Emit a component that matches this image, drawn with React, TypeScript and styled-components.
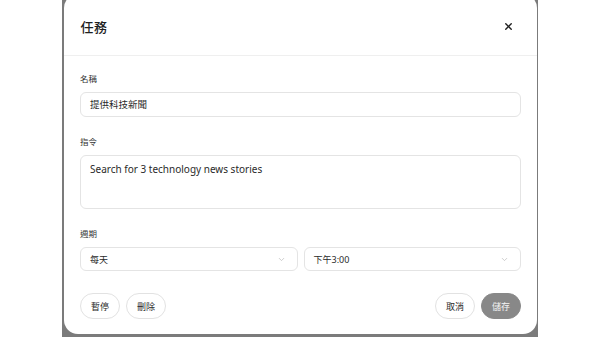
import React from 'react';
import styled, { createGlobalStyle } from 'styled-components';
import { ChevronDown, X } from 'lucide-react';

const GlobalStyle = createGlobalStyle`
  html, body {
    margin: 0;
    padding: 0;
    background: #ffffff;
  }
  body {
    font-family: "Noto Sans", "Noto Sans CJK TC", sans-serif;
    color: #222;
  }
`;

const Stage = styled.div`
  width: 600px;
  height: 337px;
  display: flex;
  justify-content: center;
  overflow: hidden;
`;

const Backdrop = styled.div`
  width: 476px;
  height: 337px;
  box-sizing: border-box;
  background: #7b7b7b;
  padding: 0 1px 3px 1.5px;
  display: flex;
  flex-direction: column;
  overflow: hidden;
`;

const Dialog = styled.div`
  flex: 1;
  margin-top: -6px;
  background: #fff;
  border-radius: 14px;
  display: flex;
  flex-direction: column;
`;

const Header = styled.div`
  height: 62px;
  box-sizing: border-box;
  padding: 4px 23px 0 17px;
  display: flex;
  align-items: center;
  justify-content: space-between;
  border-bottom: 1px solid #efefef;
`;

const Title = styled.h2`
  margin: 0;
  font-size: 13px;
  font-weight: 500;
  color: #1f1f1f;
  letter-spacing: 0.5px;
`;

const CloseButton = styled.button`
  border: 0;
  background: none;
  padding: 0;
  display: flex;
  color: #1f1f1f;
  cursor: pointer;
`;

const Body = styled.div`
  flex: 1;
  padding: 17px 16px 15px 16.5px;
  display: flex;
  flex-direction: column;
`;

const Field = styled.div`
  display: flex;
  flex-direction: column;
  margin-bottom: 19px;
`;

const Label = styled.label`
  font-size: 8.5px;
  line-height: 12px;
  color: #333;
  margin-bottom: 7px;
`;

const TextBox = styled.div<{ $tall?: boolean }>`
  box-sizing: border-box;
  height: ${({ $tall }) => ($tall ? '54px' : '25px')};
  border: 1px solid #e4e4e4;
  border-radius: 6px;
  padding: ${({ $tall }) => ($tall ? '6px 9px' : '0 9px')};
  display: flex;
  align-items: ${({ $tall }) => ($tall ? 'flex-start' : 'center')};
  font-size: ${({ $tall }) => ($tall ? '10px' : '9.5px')};
  line-height: 14px;
  color: #2a2a2a;
`;

const SelectRow = styled.div`
  display: grid;
  grid-template-columns: 1fr 1fr;
  gap: 6px;
`;

const Select = styled.div`
  box-sizing: border-box;
  height: 24px;
  border: 1px solid #e4e4e4;
  border-radius: 6px;
  padding: 0 11px 0 9px;
  display: flex;
  align-items: center;
  justify-content: space-between;
  font-size: 9px;
  color: #2a2a2a;
`;

const Footer = styled.div`
  margin-top: auto;
  display: flex;
  justify-content: space-between;
  align-items: center;
`;

const Group = styled.div`
  display: flex;
  gap: 6px;
`;

const PillButton = styled.button<{ $primary?: boolean }>`
  box-sizing: border-box;
  width: 40px;
  height: 26px;
  border-radius: 13px;
  padding: 0;
  font-family: inherit;
  font-size: 9px;
  border: 1px solid ${({ $primary }) => ($primary ? '#888' : '#e2e2e2')};
  background: ${({ $primary }) => ($primary ? '#888888' : '#fff')};
  color: ${({ $primary }) => ($primary ? '#f4f4f4' : '#2a2a2a')};
  cursor: pointer;
`;

export default function App() {
  return (
    <>
      <GlobalStyle />
      <Stage>
        <Backdrop>
          <Dialog>
            <Header>
              <Title>任務</Title>
              <CloseButton aria-label="關閉">
                <X size={11} strokeWidth={3} />
              </CloseButton>
            </Header>
            <Body>
              <Field>
                <Label>名稱</Label>
                <TextBox>提供科技新聞</TextBox>
              </Field>
              <Field>
                <Label>指令</Label>
                <TextBox $tall>Search for 3 technology news stories</TextBox>
              </Field>
              <Field>
                <Label>週期</Label>
                <SelectRow>
                  <Select>
                    每天
                    <ChevronDown size={9} color="#bdbdbd" />
                  </Select>
                  <Select>
                    下午3:00
                    <ChevronDown size={9} color="#bdbdbd" />
                  </Select>
                </SelectRow>
              </Field>
              <Footer>
                <Group>
                  <PillButton>暫停</PillButton>
                  <PillButton>刪除</PillButton>
                </Group>
                <Group>
                  <PillButton>取消</PillButton>
                  <PillButton $primary>儲存</PillButton>
                </Group>
              </Footer>
            </Body>
          </Dialog>
        </Backdrop>
      </Stage>
    </>
  );
}
